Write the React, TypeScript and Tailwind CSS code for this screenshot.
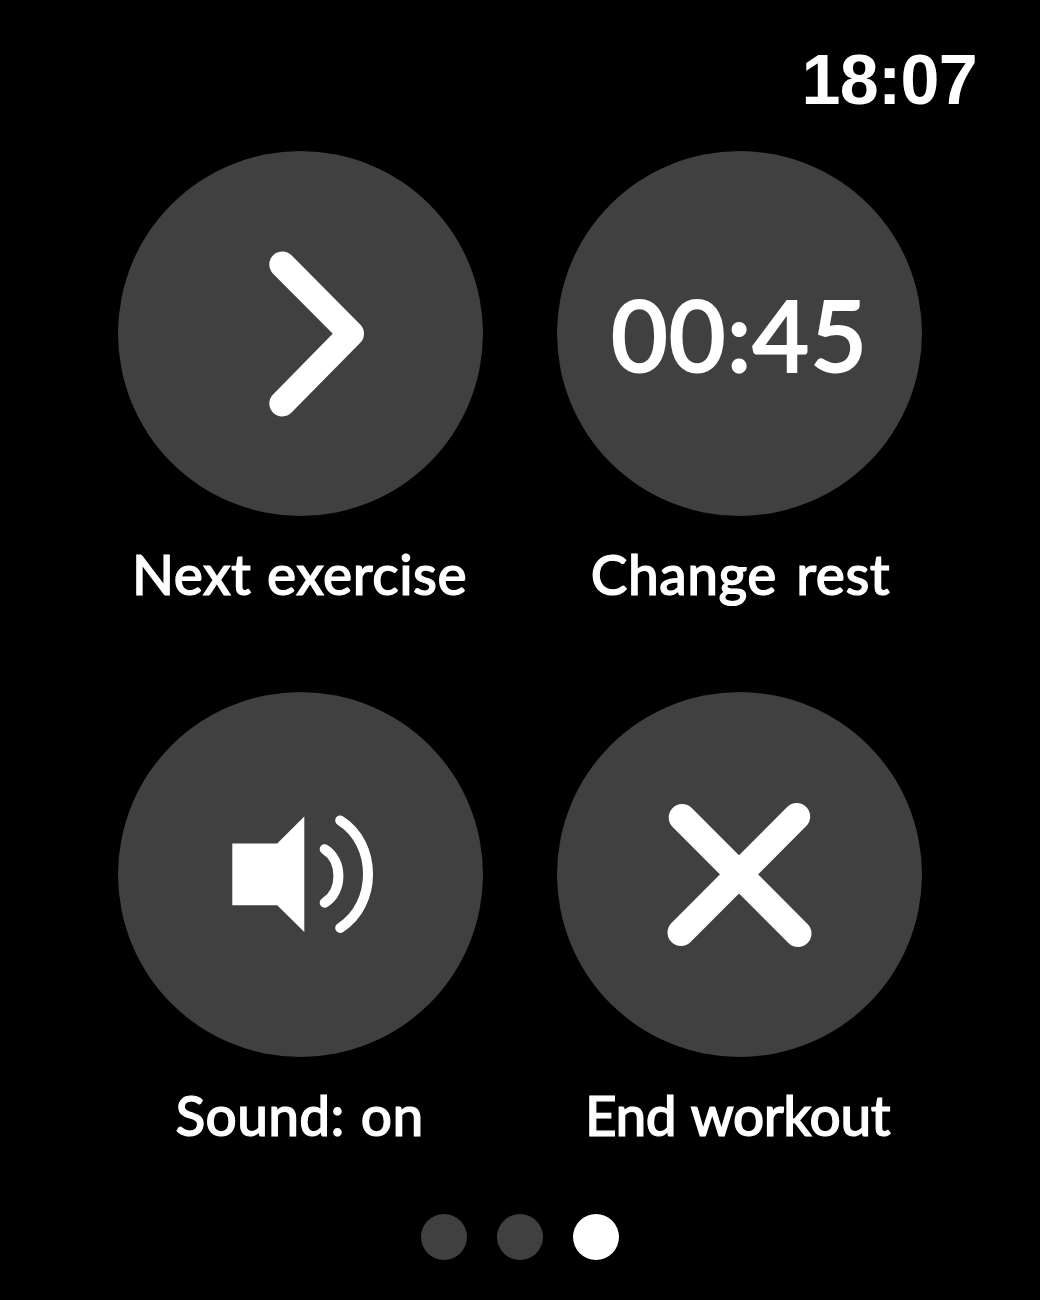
import type { ReactNode } from "react";

function Action({ label, labelClass, children }: { label: string; labelClass: string; children: ReactNode }) {
  return (
    <div className="flex w-[365px] flex-col items-center">
      <button className="flex size-[365px] items-center justify-center rounded-full bg-[#404040]">{children}</button>
      <span className={`mt-[23px] h-[73px] whitespace-nowrap text-[55px] leading-[70px] font-medium [-webkit-text-stroke:1.2px_white] ${labelClass}`}>{label}</span>
    </div>
  );
}

export default function App() {
  return (
    <main className="flex h-[1300px] w-[1040px] flex-col items-center bg-black font-['Lato',sans-serif] text-white">
      <header className="flex h-[151px] w-full shrink-0 justify-end pt-[40px] pr-[63px]">
        <time className="font-['Liberation_Sans',sans-serif] text-[70px] leading-[80px] font-bold tracking-[-0.7px]">18:07</time>
      </header>
      <section className="grid grid-cols-2 gap-x-[74px] gap-y-[80px]">
        <Action label="Next exercise" labelClass="pr-[2px] tracking-[0.5px] [word-spacing:1px]">
          <svg className="size-[365px]" viewBox="0 0 365 365" fill="none" stroke="white" strokeWidth="26" strokeLinecap="round" strokeLinejoin="round">
            <path d="M164.300 113.500L233 182.700L164.300 252.500" />
          </svg>
        </Action>
        <Action label="Change rest" labelClass="pl-[2px] tracking-[0.5px] [word-spacing:5px]">
          <span className="text-[98px] leading-none font-medium tracking-[1px] [-webkit-text-stroke:2px_white]">00:45</span>
        </Action>
        <Action label="Sound: on" labelClass="pr-[2px] tracking-[0.3px] [word-spacing:2px]">
          <svg className="size-[365px]" viewBox="0 0 365 365" fill="none" stroke="white" strokeWidth="10" strokeLinecap="round">
            <path d="M114.300 151.400H159.200L186.300 124.500V240L159.200 213.200H114.300Z" fill="white" stroke="none" />
            <path d="M206.700 157.200C225 168.500 225 199.500 206.700 210.700" />
            <path d="M222.200 128.400C259.300 151.500 259.300 212.500 222.200 235.900" />
          </svg>
        </Action>
        <Action label="End workout" labelClass="pr-[4px] tracking-[-0.5px] [word-spacing:2px]">
          <svg className="size-[365px]" viewBox="0 0 365 365" fill="none" stroke="white" strokeWidth="27" strokeLinecap="round">
            <path d="M125.200 125.500L241 241.500M239.700 124.500L124 240.500" />
          </svg>
        </Action>
      </section>
      <nav className="mt-[61px] flex gap-[30px]">
        <span className="size-[46px] rounded-full bg-[#404040]" />
        <span className="size-[46px] rounded-full bg-[#404040]" />
        <span className="size-[46px] rounded-full bg-white" />
      </nav>
    </main>
  );
}
